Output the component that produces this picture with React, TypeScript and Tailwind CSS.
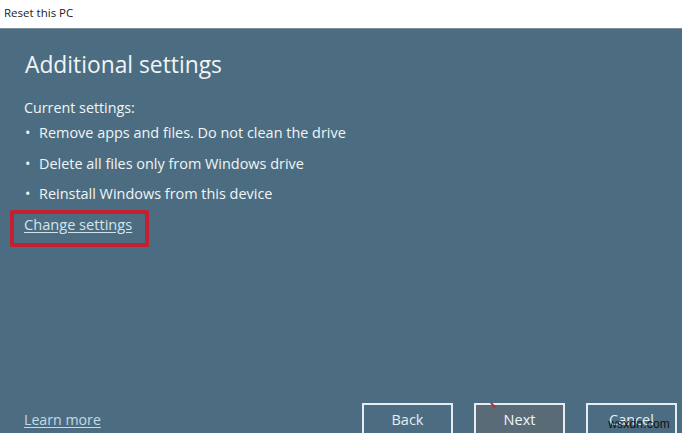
export default function App() {
  const items = [
    "Remove apps and files. Do not clean the drive",
    "Delete all files only from Windows drive",
    "Reinstall Windows from this device",
  ];
  return (
    <div className="relative flex h-[433px] w-[682px] flex-col overflow-hidden bg-[#4c6d81] font-['Open_Sans','Noto_Sans',sans-serif]">
      <div className="flex h-[29px] items-center border-b border-[#7b8f9c] bg-white pb-[3px] pl-[4px] text-[11.5px] text-[#222]">
        Reset this PC
      </div>
      <div className="flex flex-1 flex-col pl-[25px] text-[#f1f5f7]">
        <h1 className="mt-[18px] h-[36px] text-[22.8px] leading-[36px] font-normal">Additional settings</h1>
        <p className="mt-[14px] ml-[-1px] h-[21px] text-[14.3px] leading-[21px]">Current settings:</p>
        <ul className="mt-[4px] flex flex-col gap-[9.5px] text-[14.45px] leading-[21px]">
          {items.map((t) => (
            <li key={t} className="flex h-[21px]">
              <span className="w-[14px] shrink-0">•</span>
              <span>{t}</span>
            </li>
          ))}
        </ul>
        <div className="relative mt-[10px] ml-[-1px] h-[21px] w-fit text-[14.6px] leading-[21px] text-[#d5e4ec] underline underline-offset-2">
          Change settings
          <span className="absolute top-[-4px] left-[-14px] h-[37px] w-[139px] rounded-[2px] border-[4px] border-[#c4202f]" />
        </div>
        <div className="mt-auto flex h-[30px] items-start">
          <span className="mt-[6px] ml-[-1px] text-[14.2px] leading-[21px] text-[#c3dae7] underline underline-offset-2">Learn more</span>
          <div className="ml-auto flex gap-[21px] pr-[5px]">
            <button className="h-[40px] w-[91px] border-2 border-[#e6ecef] pb-[6px] text-[14.5px] text-[#e6eef3]">Back</button>
            <button className="relative h-[40px] w-[91px] border-2 border-[#e6ecef] bg-[#5a6b78] pb-[6px] text-[14.5px] text-[#f1f5f7]">
              Next
              <span className="absolute top-[-3px] left-[16px] h-[6px] w-[2px] -rotate-45 bg-[#c4202f]" />
            </button>
            <button className="h-[40px] w-[91px] border-2 border-[#e6ecef] pb-[6px] text-[14.5px] text-[#e6eef3]">Cancel</button>
          </div>
        </div>
      </div>
      <span className="absolute right-[12px] bottom-[1px] text-[12px] leading-[16px] tracking-[0.2px] text-[#111] font-['Liberation_Sans',sans-serif]">
        wsxdn.com
      </span>
    </div>
  );
}
